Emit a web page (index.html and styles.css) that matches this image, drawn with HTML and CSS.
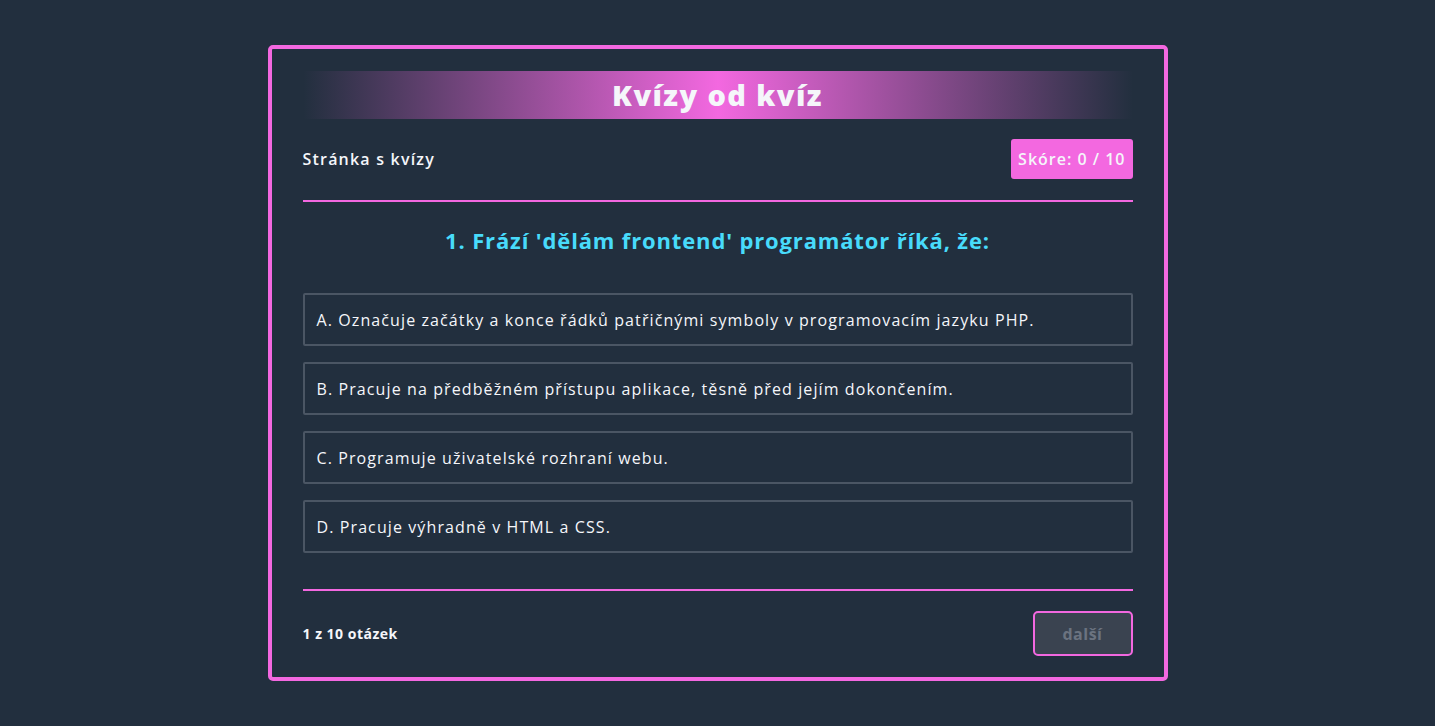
FILE: index.html
```html
<!DOCTYPE html>
<html lang="cs">
<head>
<meta charset="utf-8">
<title>Kvízy od kvíz</title>
<link rel="stylesheet" href="styles.css">
</head>
<body>
<main class="card">
  <h1 class="banner">Kvízy od kvíz</h1>
  <div class="header">
    <span class="subtitle">Stránka s kvízy</span>
    <span class="score">Skóre: 0 / 10</span>
  </div>
  <div class="question">
    <h2>1. Frází 'dělám frontend' programátor říká, že:</h2>
  </div>
  <ul class="options">
    <li class="option">A. Označuje začátky a konce řádků patřičnými symboly v programovacím jazyku PHP.</li>
    <li class="option">B. Pracuje na předběžném přístupu aplikace, těsně před jejím dokončením.</li>
    <li class="option">C. Programuje uživatelské rozhraní webu.</li>
    <li class="option">D. Pracuje výhradně v HTML a CSS.</li>
  </ul>
  <div class="footer">
    <span class="count">1 z 10 otázek</span>
    <button class="next" disabled>další</button>
  </div>
</main>
</body>
</html>
```
FILE: styles.css
```css
* { box-sizing: border-box; }
html, body { margin: 0; padding: 0; }
body {
  background: #222f3e;
  color: #f5f6fa;
  font-family: "Open Sans", "Noto Sans", sans-serif;
  min-height: 100vh;
  display: flex;
  align-items: center;
  justify-content: center;
}
.card {
  width: 900px;
  border: 4px solid #f368e0;
  border-radius: 5px;
  padding: 22px 31px 21px;
  display: flex;
  flex-direction: column;
}
.banner {
  margin: 0;
  height: 48px;
  line-height: 48px;
  text-align: center;
  font-size: 29px;
  font-weight: 800;
  letter-spacing: 1.4px;
  color: #f5f6fa;
  background: linear-gradient(90deg, rgba(243,104,224,0) 0%, #f368e0 50%, rgba(243,104,224,0) 100%);
}
.header {
  display: flex;
  justify-content: space-between;
  align-items: center;
  padding: 20px 0 21px;
  border-bottom: 2px solid #f368e0;
}
.subtitle {
  font-size: 16px;
  font-weight: 600;
  letter-spacing: 1.2px;
}
.score {
  background: #f368e0;
  border-radius: 3px;
  height: 40px;
  line-height: 40px;
  padding: 0 7px;
  font-size: 16px;
  font-weight: 600;
  letter-spacing: 1px;
}
.question h2 {
  margin: 0;
  padding: 22px 0 37px;
  text-align: center;
  color: #48dbfb;
  font-size: 22px;
  font-weight: 700;
  line-height: 32px;
  letter-spacing: 0.85px;
}
.options {
  list-style: none;
  margin: 0;
  padding: 0 0 36px;
  display: flex;
  flex-direction: column;
  gap: 16px;
  border-bottom: 2px solid #f368e0;
}
.option {
  height: 53px;
  display: flex;
  align-items: center;
  padding: 0 12px;
  border: 2px solid #4b5664;
  border-radius: 2px;
  font-size: 16px;
  letter-spacing: 1.1px;
}
.footer {
  display: flex;
  justify-content: space-between;
  align-items: center;
  padding-top: 20px;
}
.count {
  font-size: 14px;
  font-weight: 700;
  letter-spacing: 0.5px;
}
.next {
  width: 100px;
  height: 45px;
  border: 2px solid #f368e0;
  border-radius: 5px;
  background: #3a4350;
  color: #6b7380;
  font-family: inherit;
  font-size: 16px;
  font-weight: 700;
  letter-spacing: 0.5px;
}
```
